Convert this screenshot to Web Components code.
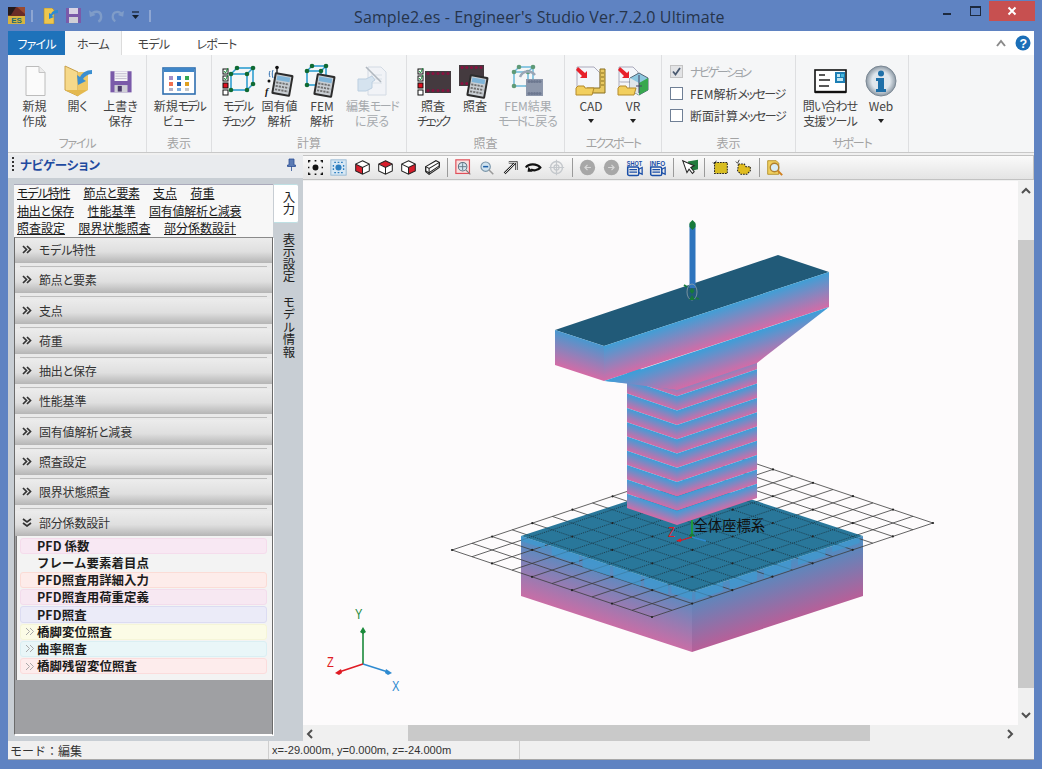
<!DOCTYPE html>
<html lang="ja">
<head>
<meta charset="utf-8">
<title>Engineer's Studio</title>
<style>
  html, body { margin: 0; height: 100%; background: #5f83c2; }
  body { font: 12px "Noto Sans CJK JP", "Noto Sans", sans-serif; font-feature-settings: "palt"; color: #444; overflow: hidden; }
</style>
</head>
<body>
<es-window></es-window>
<script>
const cubeNodes = (x, y, s, d) => {
  const p = [[x, y + d], [x + s, y + d], [x + s, y + s + d], [x, y + s + d], [x + d, y], [x + s + d, y], [x + s + d, y + s]];
  const l = [[0, 1], [1, 2], [2, 3], [3, 0], [0, 4], [1, 5], [2, 6], [4, 5], [5, 6]];
  return l.map(([a, b]) => `<line x1="${p[a][0]}" y1="${p[a][1]}" x2="${p[b][0]}" y2="${p[b][1]}" stroke="#2f9fd0" stroke-width="1.6"/>`).join("") +
    p.map(q => `<circle cx="${q[0]}" cy="${q[1]}" r="2.3" fill="#0f6a33"/>`).join("");
};
const calc = (x, y) => `<g transform="translate(${x} ${y}) rotate(10)"><rect width="19" height="22" rx="1.5" fill="#2c2c2c"/><rect x="2" y="2" width="15" height="18" fill="#c9ced3"/><rect x="3" y="3" width="13" height="4.500" fill="#7fb4d8"/><path d="M3 10h13M3 13.500h13M3 17h13" stroke="#6f6f6f" stroke-width="1.800" stroke-dasharray="2.200 1"/></g>`;
const checks = `<rect x="1" y="4" width="5" height="5" fill="#fff" stroke="#111"/><path d="M2 6l1.5 2L6 3" stroke="#1a8a3a" fill="none"/><rect x="1" y="11" width="5" height="5" fill="#fff" stroke="#111"/><path d="M2 13l1.5 2L6 10" stroke="#1a8a3a" fill="none"/><rect x="1" y="18" width="5" height="5" fill="#e01020" stroke="#111"/><rect x="1" y="25" width="5" height="5" fill="#fff" stroke="#111"/>`;
const film = (x, y, w, h, c, dot) => { let s = `<rect x="${x}" y="${y}" width="${w}" height="${h}" fill="${c}"/>`; for (let i = 0; i < 5; i++) { s += `<circle cx="${x + 3 + i * (w - 6) / 4}" cy="${y + 2.5}" r="1.5" fill="${dot}"/><circle cx="${x + 3 + i * (w - 6) / 4}" cy="${y + h - 2.5}" r="1.5" fill="${dot}"/>`; } return s; };
const folderSmall = `<path d="M1 30v-7l2-2h6l1 2h9l-2 7z" fill="#f2cf5e" stroke="#b48a2a"/>`;
const redArrow = `<path d="M3 2l7 6 2-2v7H5l2-2-6-6z" fill="#e8202a"/>`;
const cube20 = (top, left, right, extra = "") => `<path d="M10 2l8 4-8 4-8-4z" fill="${top}"/><path d="M2 6l8 4v8l-8-4z" fill="${left}"/><path d="M18 6l-8 4v8l8-4z" fill="${right}"/><path d="M10 2l8 4v8l-8 4-8-4V6zM2 6l8 4 8-4M10 10v8" fill="none" stroke="#222" stroke-width="1.2"/>${extra}`;
const shot = t => `<text x="1" y="8" textLength="18" lengthAdjust="spacingAndGlyphs" font-family="Liberation Sans" font-weight="700" font-size="7.500" fill="#1b4fa8">${t}</text><path d="M2 9.500h11a2 2 0 0 1 2 2v6a2 2 0 0 1-2 2H4a2 2 0 0 1-2-2z" fill="none" stroke="#1b4fa8" stroke-width="1.800"/><path d="M4 12.500h9M4 15.500h9" stroke="#1b4fa8" stroke-width="1.500"/><path d="M15 12l4-2v8l-4-2" fill="none" stroke="#1b4fa8" stroke-width="1.500"/>`;

const ICONS = {
  doc: `<path d="M7 1.5h13l6 6v23H7z" fill="#fbfbfb" stroke="#bcbcbc"/><path d="M20 1.5v6h6" fill="#ececec" stroke="#c4c4c4"/>`,
  open: `<path d="M3 1l13 6v24L3 25z" fill="#f6d98a" stroke="#c8a04a"/><path d="M16 7h10v18H16z" fill="#eec766"/><path d="M3 25l13 6 10-6" fill="#e4b94f"/><path d="M30 5c-6 0-10 3-12 7l-3-2 1 10 8-4-3-2c2-3 5-5 9-5z" fill="#3b8fd0"/>`,
  save: `<path d="M3 4h26v26H3z" fill="#7a5aa9"/><rect x="8" y="4" width="16" height="12" fill="#f4f4f6"/><path d="M9 7h14M9 10h14M9 13h14" stroke="#b9b3c8"/><rect x="8" y="21" width="16" height="9" fill="#cfcfd6"/><rect x="12" y="22" width="5" height="7" fill="#4a3a6a"/>`,
  view: `<rect x="0" y="3" width="32" height="26" fill="#fff" stroke="#2f6fb0" stroke-width="1.6"/><rect x="1" y="3" width="30" height="4" fill="#3f86c8"/><g><rect x="6" y="11" width="4" height="4" fill="#a08cc8"/><rect x="14" y="11" width="4" height="4" fill="#2f7fd0"/><rect x="22" y="11" width="4" height="4" fill="#34a853"/><rect x="6" y="17" width="4" height="4" fill="#f07050"/><rect x="14" y="17" width="4" height="4" fill="#1f5fb0"/><rect x="22" y="17" width="4" height="4" fill="#e0a020"/><rect x="6" y="23" width="4" height="3" fill="#b0b0c8"/><rect x="14" y="23" width="4" height="3" fill="#7fb0e0"/><rect x="22" y="23" width="4" height="3" fill="#c8c8c8"/></g>`,
  check: checks + cubeNodes(9, 3, 16, 6),
  eig: `<g fill="none" stroke="#2f6fb0"><path d="M6 6c-1 2-1 4 0 6M9 5c-1 3-1 5 0 8"/></g><path d="M13 2v8" stroke="#111" stroke-width="1.3"/><circle cx="13" cy="2.5" r="1.8" fill="#111"/><circle cx="5" cy="16" r="1.5" fill="#111"/><text x="1" y="30" font-family="Liberation Serif" font-style="italic" font-weight="700" font-size="10" fill="#111">f</text>` + calc(11, 7),
  fem: cubeNodes(1, 1, 14, 5) + calc(11, 8),
  back: `<g opacity=".55"><path d="M12 2h13l5 5v23H12z" fill="#eef2f7" stroke="#b9c6d6"/><path d="M15 10h11M15 14h11M15 18h11" stroke="#c4d0de"/><path d="M2 14h8l6-3 3 4-3 2v6l-6 3H2z" fill="#bcd4ea" stroke="#8fb0cf"/><path d="M10 2l15 15" stroke="#7b8794" stroke-width="1.6"/></g>`,
  chk2: checks + film(8, 6, 26, 22, "#443a3f", "#8a1040"),
  calc2: film(0, 0, 25, 21, "#443a3f", "#8a1040") + calc(11, 9),
  femres: `<g opacity=".65">${cubeNodes(2, 2, 14, 5)}</g>` + film(14, 14, 17, 17, "#8d97ab", "#6d7890") + `<path d="M8 12c3-7 11-7 15-2" fill="none" stroke="#9aa6b6" stroke-width="2.5"/>`,
  cad: `<path d="M2 2h17l6 6v18H2z" fill="#f4f6fa" stroke="#aab"/>` + redArrow + `<path d="M25 4h5v24H12v-5h13z" fill="#e8c860" stroke="#8a7020"/><path d="M26 8h3M26 12h3M26 16h3M26 20h3" stroke="#8a7020"/>` + folderSmall,
  vr: `<path d="M2 2h14l5 5v10H2z" fill="#f4f6fa" stroke="#aab"/><path d="M2 17v8h16" fill="#f4f6fa" stroke="#aab"/>` + redArrow + `<path d="M22 8l9 5v12l-9 5-9-5V13z" fill="#8ec8e0" stroke="#567"/><path d="M22 18l9-5v12l-9 5z" fill="#37a84e"/><path d="M22 18v12l-9-5V13z" fill="#dfe6ea"/><path d="M22 10v18M19 21h6" stroke="#446"/>` + folderSmall,
  contact: `<rect x="1" y="5" width="31" height="22" fill="#fff" stroke="#111" stroke-width="1.6"/><path d="M1 27h31" stroke="#111" stroke-width="2.4"/><path d="M5 10h6M5 15h11M5 21h10" stroke="#222" stroke-width="1.6"/><rect x="21" y="7" width="10" height="11" fill="#1d7fb5"/><rect x="23" y="9" width="3" height="3" fill="#bfe6f4"/><rect x="27" y="9" width="3" height="3" fill="#44b8dc"/><rect x="23" y="13" width="6" height="3" fill="#bfe6f4"/>`,
  info: `<defs><radialGradient id="g"><stop offset=".6" stop-color="#dfe6ec"/><stop offset="1" stop-color="#8b98a4"/></radialGradient></defs><circle cx="16" cy="16" r="15" fill="url(#g)" stroke="#7b8894"/><circle cx="16" cy="8.5" r="3" fill="#1e6fa8"/><path d="M11 13h8v11h2v3H11v-3h2v-8h-2z" fill="#1e6fa8"/>`
};
const TOOLS = {
  fit: `<path d="M2 4V2h2M16 2h2v2M2 16v2h2M18 16v2h-2M2 9v2M18 9v2M9 2h2M9 18h2" stroke="#111" stroke-width="1.6" fill="none"/><circle cx="10" cy="10" r="3.5" fill="#111"/>`,
  fit2: `<rect x="1" y="1" width="18" height="18" fill="#d8e8f4" stroke="#8fb4d0"/><circle cx="10" cy="10" r="3.6" fill="#2e7fc0"/><path d="M5 4h2M9 4h2M13 4h2M5 16h2M9 16h2M13 16h2M4 7v2M4 11v2M16 7v2M16 11v2" stroke="#2e7fc0" stroke-width="1.6"/>`,
  c1: cube20("#fff", "#d81e2c", "#fff"),
  c2: cube20("#d81e2c", "#fff", "#fff"),
  c3: cube20("#fff", "#fff", "#d81e2c"),
  c4: `<path d="M2 9l12-7 4 2v4L6 16l-4-2z" fill="#fff" stroke="#222" stroke-width="1.2"/><path d="M2 9l4 2 12-7M6 11v7" stroke="#222" stroke-width="1.2" fill="none"/><path d="M2 9v6l4 3 12-8V4" fill="none" stroke="#222" stroke-width="1.2"/>`,
  zoomw: `<rect x="1" y="1" width="16" height="16" fill="#f8e0e0" stroke="#e0505a" stroke-width="1.4"/><circle cx="9" cy="9" r="5" fill="#d4e6f0" stroke="#5a7080" stroke-width="1.2"/><path d="M9 5v8M5 9h8" stroke="#5a7080"/><path d="M13 13l5 5" stroke="#777" stroke-width="1.4"/>`,
  zoomo: `<circle cx="9" cy="9" r="5.5" fill="#cfe2ef" stroke="#7a95a8" stroke-width="1.3"/><path d="M6 9h6" stroke="#1b5fa8" stroke-width="1.8"/><path d="M13 13l5 5" stroke="#999" stroke-width="1.8"/>`,
  arrow: `<path d="M3 17L15 5M8 4h9v9" fill="none" stroke="#222" stroke-width="2.800"/><path d="M3 17L15 5M8 4h9v9" fill="none" stroke="#fff" stroke-width="1"/>`,
  rotate: `<path d="M1 10c3-5 13-5 17 0-3 4-9 4-11 2" fill="none" stroke="#111" stroke-width="2.6"/><path d="M4 9l5 6h-6z" fill="#111"/>`,
  target: `<circle cx="10" cy="10" r="7" fill="none" stroke="#c4c8cc" stroke-width="1.6"/><circle cx="10" cy="10" r="3" fill="none" stroke="#c4c8cc" stroke-width="1.4"/><path d="M10 1v18M1 10h18" stroke="#c4c8cc" stroke-width="1.4"/>`,
  prev: `<circle cx="10" cy="10" r="9" fill="#a7a7a7"/><path d="M14 10H7M10 7l-3 3 3 3" fill="none" stroke="#d8d8d8" stroke-width="1.4"/>`,
  next: `<circle cx="10" cy="10" r="9" fill="#a7a7a7"/><path d="M6 10h7M10 7l3 3-3 3" fill="none" stroke="#d8d8d8" stroke-width="1.4"/>`,
  shot: shot("SHOT"),
  inf: shot("INFO"),
  pick: `<path d="M8 3l12-2v11L12 14z" fill="#1f7a3c"/><path d="M2 2l5 14 2.5-4 4 5 2-2-4-5 4-2z" fill="#fff" stroke="#222" stroke-width="1.2"/>`,
  sel1: `<rect x="3" y="4" width="15" height="13" fill="#d8bd20" stroke="#222" stroke-width="1.2" stroke-dasharray="2 1.2"/><path d="M1 4l2 2 2-4" stroke="#222" fill="none"/>`,
  sel2: `<path d="M4 6h7l2 3h5v5l-4 4H7l-4-4z" fill="#e0bc20" stroke="#222" stroke-width="1.2" stroke-dasharray="2 1.2"/><path d="M1 3l2 2 2-4" stroke="#222" fill="none"/>`,
  find: `<path d="M2 2h10l3 3v13H2z" fill="#f0d060" stroke="#b08a20"/><circle cx="10" cy="10" r="5" fill="#d8ecf6" stroke="#b08030" stroke-width="1.6"/><path d="M14 14l5 5" stroke="#d08020" stroke-width="2.4"/>`
};

class EsIcon extends HTMLElement {
  connectedCallback() {
    const s = +(this.getAttribute("size") || 32);
    this.attachShadow({ mode: "open" }).innerHTML = `<style>:host{display:block;width:${s}px;height:${s}px}svg{display:block;overflow:visible}</style>
      <svg width="${s}" height="${s}" viewBox="0 0 32 32">${ICONS[this.getAttribute("name")]}</svg>`;
  }
}
customElements.define("es-icon", EsIcon);

class EsTitlebar extends HTMLElement {
  connectedCallback() {
    this.attachShadow({ mode: "open" }).innerHTML = `<style>
      :host { display: flex; height: 31px; align-items: flex-start; position: relative; color: #26344a; }
      .qat { display: flex; align-items: center; height: 31px; padding-left: 8px; width: 160px; flex: none; }
      .qat svg { display: block; flex: none; }
      .sep { width: 2px; height: 12px; background: #8ea6d2; flex: none; }
      .title { position: absolute; left: 354px; top: 6px; font: 16px/22px "Open Sans", sans-serif; white-space: nowrap; letter-spacing: .12px; }
      .btns { margin-left: auto; display: flex; margin-right: 7px; }
      .min, .max { width: 28px; height: 21px; display: flex; align-items: center; justify-content: center; }
      .min i { width: 8px; height: 2px; background: #1d2a3f; margin-top: 7px; }
      .max i { width: 9px; height: 7px; border: 1px solid #1d2a3f; border-top-width: 2px; }
      .close { width: 46px; height: 20px; margin-top: 1px; background: #c75050; color: #fff; display: flex; align-items: center; justify-content: center; }
    </style>
    <div class="qat">
      <svg width="17" height="17" viewBox="0 0 17 17"><rect width="17" height="17" rx="2" fill="#6a2c26"/><path d="M0 0h8L3 8H0z" fill="#241a1c"/><path d="M9 0h8v7z" fill="#9a4a30"/><rect y="9" width="17" height="8" fill="#d8b440"/><text x="8.500" y="16" text-anchor="middle" font-family="Liberation Sans" font-weight="700" font-size="8" fill="#1f6a70">ES</text></svg>
      <span class="sep" style="margin-left:6px"></span>
      <svg style="margin-left:10px" width="16" height="16" viewBox="0 0 16 16"><path d="M1 0h8l2 2v14H1z" fill="#eec64e" stroke="#a98a30" stroke-width=".6"/><path d="M15 2c-3 0-6 1-7 4L6 5v6l5-2-2-1c1-2 3-3 6-3z" fill="#2e8ad0"/></svg>
      <svg style="margin-left:7px" width="15" height="15" viewBox="0 0 15 15"><rect width="15" height="15" fill="#7a5aa9"/><rect x="3" y="0" width="9" height="6" fill="#d8d4e4"/><rect x="3" y="9" width="9" height="6" fill="#cfcfd6"/></svg>
      <svg style="margin-left:8px" width="14" height="15" viewBox="0 0 15 15"><path d="M2 7c3-5 11-5 11 2 0 2-1 4-3 5" fill="none" stroke="#7f9cc8" stroke-width="2.6"/><path d="M0 2l1 7 6-2z" fill="#7f9cc8"/></svg>
      <svg style="margin-left:8px" width="13" height="15" viewBox="0 0 15 15"><path d="M13 7C10 2 2 2 2 9c0 2 1 4 3 5" fill="none" stroke="#7f9cc8" stroke-width="2.6"/><path d="M15 2l-1 7-6-2z" fill="#7f9cc8"/></svg>
      <svg style="margin-left:7px" width="9" height="9" viewBox="0 0 9 9"><path d="M1 1h7" stroke="#14202f" stroke-width="1.2"/><path d="M1 4h7L4.500 8z" fill="#14202f"/></svg>
      <span class="sep" style="margin-left:9px"></span>
    </div>
    <div class="title">Sample2.es - Engineer's Studio Ver.7.2.0 Ultimate</div>
    <div class="btns">
      <div class="min"><i></i></div><div class="max"><i></i></div>
      <div class="close"><svg width="10" height="10" viewBox="0 0 10 10"><path d="M1.500 1.500l7 7M8.500 1.500l-7 7" stroke="#fff" stroke-width="2"/></svg></div>
    </div>`;
  }
}
customElements.define("es-titlebar", EsTitlebar);

class EsTabs extends HTMLElement {
  connectedCallback() {
    this.attachShadow({ mode: "open" }).innerHTML = `<style>
      :host { display: flex; height: 24px; background: #fff; align-items: stretch; }
      div { display: flex; align-items: center; justify-content: center; font-size: 12px; color: #444; letter-spacing: -.8px; }
      .file { width: 57px; background: #1e72ba; color: #fff; }
      .home { width: 57px; background: #f5f6f7; border-right: 1px solid #dcdcdc; box-sizing: border-box; }
      .t { width: 63px; }
      .right { margin-left: auto; display: flex; align-items: center; gap: 9px; padding-right: 3px; }
      svg { display: block; }
    </style>
    <div class="file">ファイル</div><div class="home">ホーム</div><div class="t">モデル</div><div class="t">レポート</div>
    <div class="right">
      <svg width="10" height="8" viewBox="0 0 10 8"><path d="M1 7l4-5 4 5" fill="none" stroke="#8a8a8a" stroke-width="2"/></svg>
      <svg width="16" height="16" viewBox="0 0 16 16"><circle cx="8" cy="8" r="7.500" fill="#1b6fb8"/><text x="8" y="12.500" text-anchor="middle" font-family="Liberation Sans" font-weight="700" font-size="12.500" fill="#fff">?</text></svg>
    </div>`;
  }
}
customElements.define("es-tabs", EsTabs);

class RibbonGroup extends HTMLElement {
  connectedCallback() {
    const w = this.getAttribute("width");
    const pad = this.getAttribute("pad") || 5;
    const tight = this.getAttribute("tight") || 0;
    this.attachShadow({ mode: "open" }).innerHTML = `<style>
      :host { display: flex; flex-direction: column; width: ${w}px; box-sizing: border-box; border-right: 1px solid #dedfe1; height: 97px; flex: none; }
      .row { display: flex; flex: 1; padding-left: ${pad}px; }
      .label { height: 17px; text-align: center; color: #a3a3a3; font-size: 12px; line-height: 17px; margin-bottom: 1px; letter-spacing: ${tight}px; }
    </style>
    <div class="row"><slot></slot></div><div class="label">${this.getAttribute("label")}</div>`;
  }
}
customElements.define("ribbon-group", RibbonGroup);

class RibbonButton extends HTMLElement {
  connectedCallback() {
    const w = this.getAttribute("width") || 42;
    const s = this.getAttribute("iconsize") || 32;
    const dis = this.hasAttribute("disabled");
    const menu = this.hasAttribute("menu");
    this.attachShadow({ mode: "open" }).innerHTML = `<style>
      :host { display: flex; flex-direction: column; align-items: center; width: ${w}px; flex: none; padding-top: 9px; color: ${dis ? "#a6aaae" : "#444"}; }
      .ic { height: 33px; display: flex; align-items: center; justify-content: center; }
      .tx { margin-top: 1px; text-align: center; line-height: 15px; white-space: nowrap; font-size: 12px; }
      .arrow { width: 0; height: 0; border: 3px solid transparent; border-top: 4px solid #222; border-bottom: 0; margin: 6px auto 0; }
    </style>
    <div class="ic"><es-icon name="${this.getAttribute("icon")}" size="${s}"></es-icon></div>
    <div class="tx"><slot></slot>${menu ? '<div class="arrow"></div>' : ""}</div>`;
  }
}
customElements.define("ribbon-button", RibbonButton);

class RibbonCheck extends HTMLElement {
  connectedCallback() {
    const dis = this.hasAttribute("disabled");
    this.attachShadow({ mode: "open" }).innerHTML = `<style>
      :host { display: flex; align-items: center; gap: 7px; height: 22px; color: ${dis ? "#a0a4a8" : "#444"}; white-space: nowrap; font-size: 12px; }
      .b { width: 11px; height: 11px; border: 1px solid ${dis ? "#c4c4c4" : "#6f7f95"}; background: ${dis ? "#e2e3e5" : "#fff"}; display: block; flex: none; }
      svg { display: block; }
    </style>
    <span class="b">${dis ? '<svg width="11" height="11" viewBox="0 0 11 11"><path d="M2 5.500l2.500 3L9 2" fill="none" stroke="#4a5a70" stroke-width="1.800"/></svg>' : ""}</span><span><slot></slot></span>`;
  }
}
customElements.define("ribbon-check", RibbonCheck);

class EsRibbon extends HTMLElement {
  connectedCallback() {
    this.attachShadow({ mode: "open" }).innerHTML = `<style>
      :host { display: flex; height: 97px; background: #f5f6f7; border-bottom: 1px solid #c8c8c8; }
    </style><slot></slot>`;
  }
}
customElements.define("es-ribbon", EsRibbon);

class NavLinks extends HTMLElement {
  connectedCallback() {
    const items = [["モデル特性", -1], ["節点と要素", -.5], ["支点", 0], ["荷重", 0], ["抽出と保存", -.3], ["性能基準", 0], ["固有値解析と減衰", -.3], ["照査設定", 0], ["限界状態照査", 0], ["部分係数設計", 0]];
    this.attachShadow({ mode: "open" }).innerHTML = `<style>
      :host { display: block; background: #f7f7f7; border-top: 1px solid #aab; height: 53px; box-sizing: border-box; width: 259px; }
      .wrap { display: flex; flex-wrap: wrap; column-gap: 13.500px; align-content: flex-start; margin-top: -1px; padding-left: 3px; }
      a { color: #1a1a1a; text-decoration: underline; line-height: 17.500px; font-size: 12px; white-space: nowrap; }
    </style><div class="wrap">${items.map(([t, s]) => `<a style="letter-spacing:${s}px">${t}</a>`).join("")}</div>`;
  }
}
customElements.define("nav-links", NavLinks);

class NavItem extends HTMLElement {
  connectedCallback() {
    const first = this.hasAttribute("first");
    const open = this.hasAttribute("open");
    this.attachShadow({ mode: "open" }).innerHTML = `<style>
      :host { display: block; height: ${first ? 25 : 30.3}px; box-sizing: border-box; padding-top: ${first ? 0 : 5.3}px; background: #e9e9e9; position: relative; }
      :host(:not([first]))::before { content: ""; position: absolute; left: 5px; right: 5px; top: 3px; height: 1px; background: #bdbdbd; }
      .bar { height: 25px; box-sizing: border-box; padding-bottom: 2px; background: linear-gradient(#ececec, #dfdfdf 55%, #b5b5b5); display: flex; align-items: center; padding-left: 7px; gap: 7px; font-size: 12px; color: #333; letter-spacing: -.2px; }
      svg { display: block; }
    </style>
    <div class="bar">
      <svg width="10" height="9" viewBox="0 0 10 9">${open
        ? '<path d="M1 1l4 3 4-3M1 5l4 3 4-3" fill="none" stroke="#333" stroke-width="1.700"/>'
        : '<path d="M1 1l3.500 3.500L1 8M5 1l3.500 3.500L5 8" fill="none" stroke="#333" stroke-width="1.700"/>'}</svg>
      <span><slot></slot></span>
    </div>`;
  }
}
customElements.define("nav-item", NavItem);

class PfdItem extends HTMLElement {
  connectedCallback() {
    const more = this.hasAttribute("more");
    const c = this.getAttribute("color");
    const b = this.getAttribute("edge");
    this.attachShadow({ mode: "open" }).innerHTML = `<style>
      :host { display: flex; align-items: center; height: 16.200px; margin-bottom: 1px; background: ${c}; border: 1px solid ${b}; border-radius: 3px; box-sizing: border-box; padding-left: ${more ? 4 : 16}px; font-weight: 700; color: #1c1c1c; font-size: 12.400px; font-feature-settings: normal; white-space: nowrap; letter-spacing: .1px; }
      .m { color: #a9a9a9; font-weight: 400; width: 12px; display: block; }
      svg { display: block; }
    </style>
    ${more ? '<span class="m"><svg width="10" height="9" viewBox="0 0 10 9"><path d="M1 1l3.500 3.500L1 8M5 1l3.500 3.500L5 8" fill="none" stroke="#a9a9a9" stroke-width="1"/></svg></span>' : ""}<slot></slot>`;
  }
}
customElements.define("pfd-item", PfdItem);

class NavPanel extends HTMLElement {
  connectedCallback() {
    this.attachShadow({ mode: "open" }).innerHTML = `<style>
      :host { display: flex; flex-direction: column; width: 295px; flex: none; background: #c8ced4; }
      header { height: 23px; box-sizing: border-box; padding-bottom: 4px; background: #e9ebee; display: flex; align-items: center; flex: none; padding-left: 4px; color: #1f4aa0; font-weight: 700; font-size: 12.500px; }
      .grip { width: 2px; height: 15px; margin-right: 6px; background: repeating-linear-gradient(#333 0 2px, transparent 2px 4px); }
      .pin { margin-left: auto; margin-right: 7px; display: block; }
      .body { flex: 1; display: flex; padding: 6px 0 6px 6px; min-height: 0; }
      .left { width: 260px; display: flex; flex-direction: column; flex: none; }
      .acc { flex: 1; display: flex; flex-direction: column; border: 1px solid #6b6b6b; border-top-color: #8a8a8a; border-bottom-color: #fff; box-shadow: 1px 1px 0 #fff; background: #9fa0a3; margin-right: 1px; }
      .tabs { display: flex; flex-direction: column; width: 24px; }
      .tab { writing-mode: vertical-rl; color: #222; font-size: 12.400px; display: flex; align-items: center; justify-content: center; padding-left: 6px; box-sizing: border-box; }
      .on { background: #fff; height: 39px; border-radius: 0 2px 2px 0; border-top: 1px solid #bfe0e4; border-bottom: 1px solid #bfe0e4; }
      .t2 { height: 64px; margin-top: 3px; }
      .t3 { height: 62px; margin-top: 6px; }
      .list { padding: 2px 5px 2px 3px; background: #f3f3f3; border-left: 1px solid #777; margin-left: 1px; box-sizing: border-box; height: 144px; }
    </style>
    <header><span class="grip"></span>ナビゲーション
      <svg class="pin" width="9" height="13" viewBox="0 0 9 13"><path d="M2 1h5v6h1.500v1.500h-8V7H2zM4.500 8.500V13" fill="#5b7bb4" stroke="#2b4f94" stroke-width=".8"/></svg>
    </header>
    <div class="body">
      <div class="left">
        <nav-links></nav-links>
        <div class="acc">
          <nav-item first>モデル特性</nav-item>
          <nav-item>節点と要素</nav-item>
          <nav-item>支点</nav-item>
          <nav-item>荷重</nav-item>
          <nav-item>抽出と保存</nav-item>
          <nav-item>性能基準</nav-item>
          <nav-item>固有値解析と減衰</nav-item>
          <nav-item>照査設定</nav-item>
          <nav-item>限界状態照査</nav-item>
          <nav-item open>部分係数設計</nav-item>
          <div class="list">
            <pfd-item color="#f8e8f3" edge="#f5dcec">PFD 係数</pfd-item>
            <pfd-item color="#f3f3f3" edge="#f3f3f3">フレーム要素着目点</pfd-item>
            <pfd-item color="#fdecea" edge="#fbdcd6">PFD照査用詳細入力</pfd-item>
            <pfd-item color="#f7e8f2" edge="#f3dcec">PFD照査用荷重定義</pfd-item>
            <pfd-item color="#ebebf8" edge="#dcdcf2">PFD照査</pfd-item>
            <pfd-item more color="#fbfbe6" edge="#f5f5d8">橋脚変位照査</pfd-item>
            <pfd-item more color="#e9f6f8" edge="#daeff3">曲率照査</pfd-item>
            <pfd-item more color="#fdecec" edge="#fbdcdc">橋脚残留変位照査</pfd-item>
          </div>
        </div>
      </div>
      <div class="tabs">
        <div class="tab on">入力</div>
        <div class="tab t2">表示設定</div>
        <div class="tab t3">モデル情報</div>
      </div>
    </div>`;
  }
}
customElements.define("nav-panel", NavPanel);

class ViewToolbar extends HTMLElement {
  connectedCallback() {
    const seq = ["fit", "fit2", "c1", "c2", "c3", "c4", "|", "zoomw", "zoomo", "arrow", "rotate", "target", "|", "prev", "next", "shot", "inf", "|", "pick", "|", "sel1", "sel2", "|", "find"];
    this.attachShadow({ mode: "open" }).innerHTML = `<style>
      :host { display: flex; align-items: center; height: 25px; box-sizing: border-box; background: linear-gradient(#fafafa, #e4e4e4); border: 1px solid #c2c2c2; border-left: 0; padding-left: 1px; flex: none; }
      .t { width: 23.300px; display: flex; justify-content: center; flex: none; }
      .s { width: 1px; height: 19px; background: #9a9a9a; margin: 0 3.500px; flex: none; }
      svg { display: block; overflow: visible; }
    </style>${seq.map(n => n === "|" ? '<span class="s"></span>' : `<span class="t"><svg width="17" height="17" viewBox="0 0 20 20">${TOOLS[n]}</svg></span>`).join("")}`;
  }
}
customElements.define("view-toolbar", ViewToolbar);

class ModelView extends HTMLElement {
  connectedCallback() {
    let defs = "", id = 0;
    const BLUE = "#3b9fd9", PINK = "#d46ba6";
    // a face whose colour runs from the edge a-b down to the edge d-c
    const face = (a, b, c, d, c1 = BLUE, c2 = PINK) => {
      const ex = b[0] - a[0], ey = b[1] - a[1], el = Math.hypot(ex, ey);
      const nx = -ey / el, ny = ex / el;
      const k = (d[0] - a[0]) * nx + (d[1] - a[1]) * ny;
      const gid = "f" + id++;
      defs += `<linearGradient id="${gid}" gradientUnits="userSpaceOnUse" x1="${a[0]}" y1="${a[1]}" x2="${a[0] + nx * k}" y2="${a[1] + ny * k}"><stop offset="0" stop-color="${c1}"/><stop offset="1" stop-color="${c2}"/></linearGradient>`;
      return `<polygon points="${[a, b, c, d].join(" ")}" fill="url(#${gid})"/>`;
    };
    const lerp = (a, b, t) => [a[0] + (b[0] - a[0]) * t, a[1] + (b[1] - a[1]) * t];

    // footing
    const fL = [521, 536], fF = [692, 592], fR = [863, 536], fB = [692, 480], H = 60;
    const dn = p => [p[0], p[1] + H];
    const footing = face(fL, fF, dn(fF), dn(fL), "#4a8fc4", "#c96ea6") + face(fF, fR, dn(fR), dn(fF), "#4a8fc4", "#b85f98");

    // grid
    const gL = [452, 550], gB = [733, 456], gF = [652, 617], NA = 14, NB = 10;
    const gpt = (i, j) => [gL[0] + (gB[0] - gL[0]) * i / NA + (gF[0] - gL[0]) * j / NB, gL[1] + (gB[1] - gL[1]) * i / NA + (gF[1] - gL[1]) * j / NB];
    let lines = "", dots = "";
    for (let i = 0; i <= NA; i++) { const a = gpt(i, 0), b = gpt(i, NB); lines += `M${a[0]} ${a[1]}L${b[0]} ${b[1]}`; }
    for (let j = 0; j <= NB; j++) { const a = gpt(0, j), b = gpt(NA, j); lines += `M${a[0]} ${a[1]}L${b[0]} ${b[1]}`; }
    for (let i = 0; i <= NA; i += 2) for (let j = 0; j <= NB; j += 2) { const p = gpt(i, j); dots += `<circle cx="${p[0]}" cy="${p[1]}" r="1.100" fill="#222"/>`; }

    // lighter patches along the front edges of the footing
    let patches = "";
    const patch = (p, q, s, e, h) => {
      const a = lerp(p, q, s), b = lerp(p, q, e);
      return `<polygon points="${a} ${b} ${b[0]},${b[1] + h} ${a[0]},${a[1] + h}" fill="#3f9ad0" opacity=".7"/>`;
    };
    [[0, .14, 5], [.18, .34, 9], [.36, .52, 11], [.54, .7, 11], [.72, .86, 10], [.88, 1, 8]].forEach(([s, e, h]) => { patches += patch(fL, fF, s, e, h); });
    [[.02, .18, 9], [.22, .38, 10], [.42, .58, 10], [.62, .78, 8], [.82, .98, 6]].forEach(([s, e, h]) => { patches += patch(fF, fR, s, e, h); });

    // column of stacked bands, from the bottom up
    const cL = [627, 508], cF = [677, 525], cR = [757, 498], BAND = 14.3;
    let column = "";
    for (let i = 9; i >= 0; i--) {
      const b = i * BAND, t = b + BAND;
      const up = (p, h) => [p[0], p[1] - h];
      column += face(up(cL, t), up(cF, t), up(cF, b), up(cL, b));
      column += face(up(cF, t), up(cR, t), up(cR, b), up(cF, b));
    }

    // deck
    const deck = `<polygon points="555,330 778,255 829,272 604,346" fill="#215a78"/>` +
      face([555, 330], [604, 346], [604, 381], [555, 365], "#4898cf", "#d46ba6") +
      face([604, 346], [829, 272], [829, 307], [604, 381], "#3f9fd6", "#d46ba6");
    const haunch = `<polygon points="604,381 627,383 677,390 640,369" fill="#3d9fd8"/>` +
      face([606, 381], [829, 307], [757, 363], [677, 390], "#3b9fd9", "#d46ba6");
    const axisText = (x, y, c, t) => `<text class="ax" transform="translate(${x} ${y}) scale(.74 1)" fill="${c}">${t}</text>`;

    this.attachShadow({ mode: "open" }).innerHTML = `<style>
      :host { display: block; background: #fdfbfc; overflow: hidden; min-width: 0; min-height: 0; }
      svg { display: block; }
      text { font-family: "Noto Sans CJK JP", sans-serif; }
      .ax { font-family: "Liberation Sans", sans-serif; font-size: 15px; }
    </style>
    <svg width="715" height="544" viewBox="303 181 715 544">
      <defs>DEFS
        <clipPath id="top"><polygon points="${fL} ${fB} ${fR} ${fF}"/></clipPath>
      </defs>
      ${footing}
      <path d="${lines}" fill="none" stroke="#3c3c3c" stroke-width=".8"/>
      <polygon points="${fL} ${fB} ${fR} ${fF}" fill="#29779a"/>
      ${patches}
      <path d="${lines}" fill="none" stroke="#1d3a48" stroke-width=".9" stroke-dasharray="1 1" clip-path="url(#top)"/>
      ${dots}
      ${column}
      ${deck}${haunch}
      <rect x="689.500" y="224" width="6" height="64" fill="#2e74bd"/>
      <path d="M692.500 220l3 3v4l-3 3-3-3v-4z" fill="#177a3a"/>
      <ellipse cx="692" cy="292" rx="5" ry="8" fill="none" stroke="#8fa0a8" stroke-width=".8"/>
      <path d="M692 288l2.500 3-2.500 3-2.500-3z" fill="#177a3a"/><path d="M692 295l3 5h-6z" fill="#177a3a"/><path d="M684 285l3 2M696 298l3 1" stroke="#177a3a" stroke-width="1.800"/>
      <path d="M692 537v-17" stroke="#1f9a3c" stroke-width="2"/><circle cx="692" cy="536" r="2.500" fill="#177a3a"/>
      <path d="M692 537l-13 4" stroke="#e01b24" stroke-width="1.200"/><path d="M676 541l5-3v4z" fill="#e01b24"/>
      <path d="M692 537l14 4" stroke="#2e8ad0" stroke-width="1.800"/>
      ${axisText(668, 537, "#e01b24", "Z")}
      <text x="693.500" y="531" font-size="14.300" fill="#111">全体座標系</text>

      <path d="M363 664v-34" stroke="#1b8a3a" stroke-width="1.600"/><path d="M363 627l3 5-3 2-3-2z" fill="#1b8a3a"/>
      <path d="M363 664l-24 8" stroke="#e01b24" stroke-width="1.600"/><path d="M335 673l6-4 1 4-3 2z" fill="#e01b24"/>
      <path d="M363 664l25 8" stroke="#2e8ad0" stroke-width="1.600"/><path d="M392 673l-6-4-1 4 3 2z" fill="#2e8ad0"/>
      ${axisText(355, 619, "#1b8a3a", "Y")}
      ${axisText(327, 667, "#e01b24", "Z")}
      ${axisText(392, 691, "#2e8ad0", "X")}
    </svg>`.replace("DEFS", defs);
  }
}
customElements.define("model-view", ModelView);

class ScrollBar extends HTMLElement {
  connectedCallback() {
    const v = this.hasAttribute("vertical");
    const a = v ? "M1 7l4-4 4 4" : "M6 1L2 5l4 4";
    const b = v ? "M1 3l4 4 4-4" : "M3 1l4 4-4 4";
    this.attachShadow({ mode: "open" }).innerHTML = `<style>
      :host { display: flex; flex-direction: ${v ? "column" : "row"}; background: #f0f0f0; align-items: stretch; min-width: 0; min-height: 0; }
      .btn { flex: none; ${v ? "height: 20px" : "width: 16px"}; display: flex; align-items: center; justify-content: center; }
      .gap { flex: none; ${v ? "height:" : "width:"} ${this.getAttribute("before")}px; }
      .thumb { flex: none; background: #c9c9c9; ${v ? "height:" : "width:"} ${this.getAttribute("length")}px; }
      .end { margin-${v ? "top" : "left"}: auto; }
      svg { display: block; }
    </style>
    <div class="btn"><svg width="10" height="10" viewBox="0 0 10 10"><path d="${a}" fill="none" stroke="#505050" stroke-width="2"/></svg></div>
    <div class="gap"></div><div class="thumb"></div>
    <div class="btn end"><svg width="10" height="10" viewBox="0 0 10 10"><path d="${b}" fill="none" stroke="#505050" stroke-width="2"/></svg></div>`;
  }
}
customElements.define("scroll-bar", ScrollBar);

class ViewPane extends HTMLElement {
  connectedCallback() {
    this.attachShadow({ mode: "open" }).innerHTML = `<style>
      :host { flex: 1; min-width: 0; display: flex; flex-direction: column; }
      .grid { flex: 1; min-height: 0; display: grid; grid-template-columns: 715px 16px; grid-template-rows: 544px 17px; margin-top: 1px; background: #f0f0f0; }
      .corner { background: #f0f0f0; }
    </style>
    <view-toolbar></view-toolbar>
    <div class="grid">
      <model-view></model-view>
      <scroll-bar vertical before="39" length="448"></scroll-bar>
      <scroll-bar before="89" length="462"></scroll-bar>
      <div class="corner"></div>
    </div>`;
  }
}
customElements.define("view-pane", ViewPane);

class EsStatus extends HTMLElement {
  connectedCallback() {
    this.attachShadow({ mode: "open" }).innerHTML = `<style>
      :host { display: flex; height: 19px; background: #f0f0f0; border-bottom: 1px solid #a8a8a8; box-sizing: border-box; color: #333; font-size: 12px; font-feature-settings: normal; align-items: stretch; }
      div { display: flex; align-items: center; box-sizing: border-box; white-space: nowrap; }
      .a { width: 260px; padding-left: 2px; }
      .b { width: 251px; border-left: 1px solid #cfcfcf; padding-left: 3px; font: 11.100px "Liberation Sans", sans-serif; }
      .c { flex: 1; border-left: 1px solid #cfcfcf; }
    </style>
    <div class="a">モード：編集</div><div class="b">x=-29.000m, y=0.000m, z=-24.000m</div><div class="c"></div>`;
  }
}
customElements.define("es-status", EsStatus);

class EsWindow extends HTMLElement {
  connectedCallback() {
    this.attachShadow({ mode: "open" }).innerHTML = `<style>
      :host { display: flex; flex-direction: column; width: 1042px; height: 769px; background: #5f83c2; box-sizing: border-box; }
      .client { flex: 1; margin: 0 8px 9px 8px; display: flex; flex-direction: column; background: #f0f0f0; min-height: 0; }
      .work { flex: 1; display: flex; min-height: 0; margin-top: 2px; }
      .checks { display: flex; flex-direction: column; padding: 5px 0 0 8px; }
      .k { letter-spacing: -1.500px; }
      .k2 { letter-spacing: -2.400px; }
      .k3 { letter-spacing: -.9px; }
    </style>
    <es-titlebar></es-titlebar>
    <div class="client">
      <es-tabs></es-tabs>
      <es-ribbon>
        <ribbon-group width="139" label="ファイル" tight="-1.2" pad="5">
          <ribbon-button width="43" icon="doc">新規<br>作成</ribbon-button>
          <ribbon-button width="43" icon="open">開く</ribbon-button>
          <ribbon-button width="43" icon="save" iconsize="26">上書き<br>保存</ribbon-button>
        </ribbon-group>
        <ribbon-group width="65" label="表示" pad="0">
          <ribbon-button width="64" icon="view">新規<span class="k2">モデル</span><br>ビュー</ribbon-button>
        </ribbon-group>
        <ribbon-group width="195" label="計算">
          <ribbon-button width="42" icon="check"><span class="k">モデル</span><br><span class="k2">チェック</span></ribbon-button>
          <ribbon-button width="41" icon="eig">固有値<br>解析</ribbon-button>
          <ribbon-button width="44" icon="fem">FEM<br>解析</ribbon-button>
          <ribbon-button width="56" icon="back" disabled>編集<span class="k">モード</span><br>に戻る</ribbon-button>
        </ribbon-group>
        <ribbon-group width="158" label="照査">
          <ribbon-button width="42" icon="chk2">照査<br><span class="k2">チェック</span></ribbon-button>
          <ribbon-button width="42" icon="calc2">照査</ribbon-button>
          <ribbon-button width="64" icon="femres" disabled>FEM結果<br><span class="k2">モード</span>に戻る</ribbon-button>
        </ribbon-group>
        <ribbon-group width="97" label="エクスポート" tight="-1.8">
          <ribbon-button width="42" icon="cad" menu>CAD</ribbon-button>
          <ribbon-button width="42" icon="vr" menu>VR</ribbon-button>
        </ribbon-group>
        <ribbon-group width="134" label="表示" pad="0">
          <div class="checks">
            <ribbon-check disabled><span class="k2">ナビゲーション</span></ribbon-check>
            <ribbon-check>FEM解析<span class="k">メッセージ</span></ribbon-check>
            <ribbon-check>断面計算<span class="k">メッセージ</span></ribbon-check>
          </div>
        </ribbon-group>
        <ribbon-group width="113" label="サポート" tight="-1.2">
          <ribbon-button width="58" icon="contact"><span class="k3">問い合わせ</span><br><span class="k3">支援ツール</span></ribbon-button>
          <ribbon-button width="44" icon="info" menu>Web</ribbon-button>
        </ribbon-group>
      </es-ribbon>
      <div class="work">
        <nav-panel></nav-panel>
        <view-pane></view-pane>
      </div>
      <es-status></es-status>
    </div>`;
  }
}
customElements.define("es-window", EsWindow);
</script>
</body>
</html>
